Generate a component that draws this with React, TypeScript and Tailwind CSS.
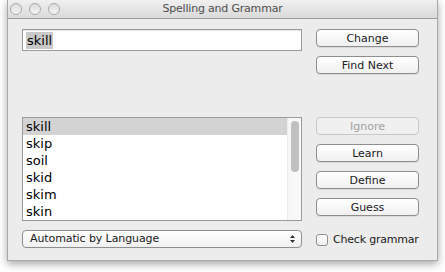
import React from "react";

const font = { fontFamily: '"Lucida Grande", "DejaVu Sans", sans-serif' };

function Btn({ label, disabled }: { label: string; disabled?: boolean }) {
  return (
    <div
      className={`h-[18px] w-[103px] rounded-[4px] border flex items-center justify-center text-[11px] leading-none ${
        disabled
          ? "border-[#c8c8c8] bg-[#f0f0f0] text-[#a0a0a0]"
          : "border-[#8e8e8e] bg-gradient-to-b from-[#ffffff] to-[#f0f0f0] text-[#1a1a1a] shadow-[0_1px_0_rgba(0,0,0,0.08)]"
      }`}
    >
      {label}
    </div>
  );
}

export default function App() {
  const words = ["skill", "skip", "soil", "skid", "skim", "skin"];
  return (
    <div className="w-[445px] h-[272px] bg-white overflow-hidden" style={font}>
      <div className="ml-[7px] w-[431px] h-[261px] bg-[#ececec] border-x border-b border-[#a8a8a8] shadow-[0_3px_8px_rgba(0,0,0,0.35)] flex flex-col">
        <div className="h-[19px] border-b border-[#9a9a9a] bg-gradient-to-b from-[#f0f0f0] to-[#dadada] flex items-center relative">
          <div className="flex gap-[7px] ml-[2px]">
            {[0, 1, 2].map((i) => (
              <div
                key={i}
                className="w-[12px] h-[12px] rounded-full border border-[#a9a9a9] bg-gradient-to-b from-[#dcdcdc] to-[#f4f4f4]"
              />
            ))}
          </div>
          <div className="absolute inset-0 flex items-center justify-center text-[11px] tracking-[-0.2px] text-[#4d4d4d]">
            Spelling and Grammar
          </div>
        </div>
        <div className="flex pl-[14px] pt-[10px]">
          <div className="w-[280px] flex flex-col">
            <div className="h-[22px] border border-[#9b9b9b] bg-white flex items-center pl-[3px] shadow-[inset_0_1px_0_rgba(0,0,0,0.1)]">
              <span className="bg-[#c8c8c8] text-[13px] text-black px-[1px] leading-[17px]">skill</span>
            </div>
            <div className="h-[66px]" />
            <div className="h-[104px] border border-[#9b9b9b] bg-white flex overflow-hidden">
              <div className="flex-1 flex flex-col">
                {words.map((w, i) => (
                  <div
                    key={w}
                    className={`h-[17px] pl-[3px] text-[13px] leading-[17px] text-black ${i === 0 ? "bg-[#d3d3d3]" : ""}`}
                  >
                    {w}
                  </div>
                ))}
              </div>
              <div className="w-[14px] bg-gradient-to-r from-[#f6f6f6] to-[#fafafa] border-l border-[#ececec] pt-[3px] flex justify-center">
                <div className="w-[8px] h-[51px] rounded-full bg-[#c0c0c0]" />
              </div>
            </div>
            <div className="mt-[9px] h-[18px] rounded-[4px] border border-[#8e8e8e] bg-gradient-to-b from-[#ffffff] to-[#f0f0f0] flex items-center pl-[7px] pr-[5px] text-[11px] tracking-[-0.1px] text-[#1a1a1a]">
              <span className="flex-1">Automatic by Language</span>
              <svg width="7" height="10" viewBox="0 0 7 10">
                <path d="M1 4 L3.5 1 L6 4 Z" fill="#333" />
                <path d="M1 6 L3.5 9 L6 6 Z" fill="#333" />
              </svg>
            </div>
          </div>
          <div className="ml-[14px] flex flex-col">
            <Btn label="Change" />
            <div className="h-[9px]" />
            <Btn label="Find Next" />
            <div className="h-[43px]" />
            <Btn label="Ignore" disabled />
            <div className="h-[9px]" />
            <Btn label="Learn" />
            <div className="h-[9px]" />
            <Btn label="Define" />
            <div className="h-[9px]" />
            <Btn label="Guess" />
            <div className="mt-[16px] flex items-center gap-[5px]">
              <div className="w-[12px] h-[12px] rounded-[3px] border border-[#8e8e8e] bg-gradient-to-b from-[#ffffff] to-[#eeeeee]" />
              <span className="text-[11px] tracking-[-0.2px] text-[#1a1a1a]">Check grammar</span>
            </div>
          </div>
        </div>
      </div>
    </div>
  );
}
